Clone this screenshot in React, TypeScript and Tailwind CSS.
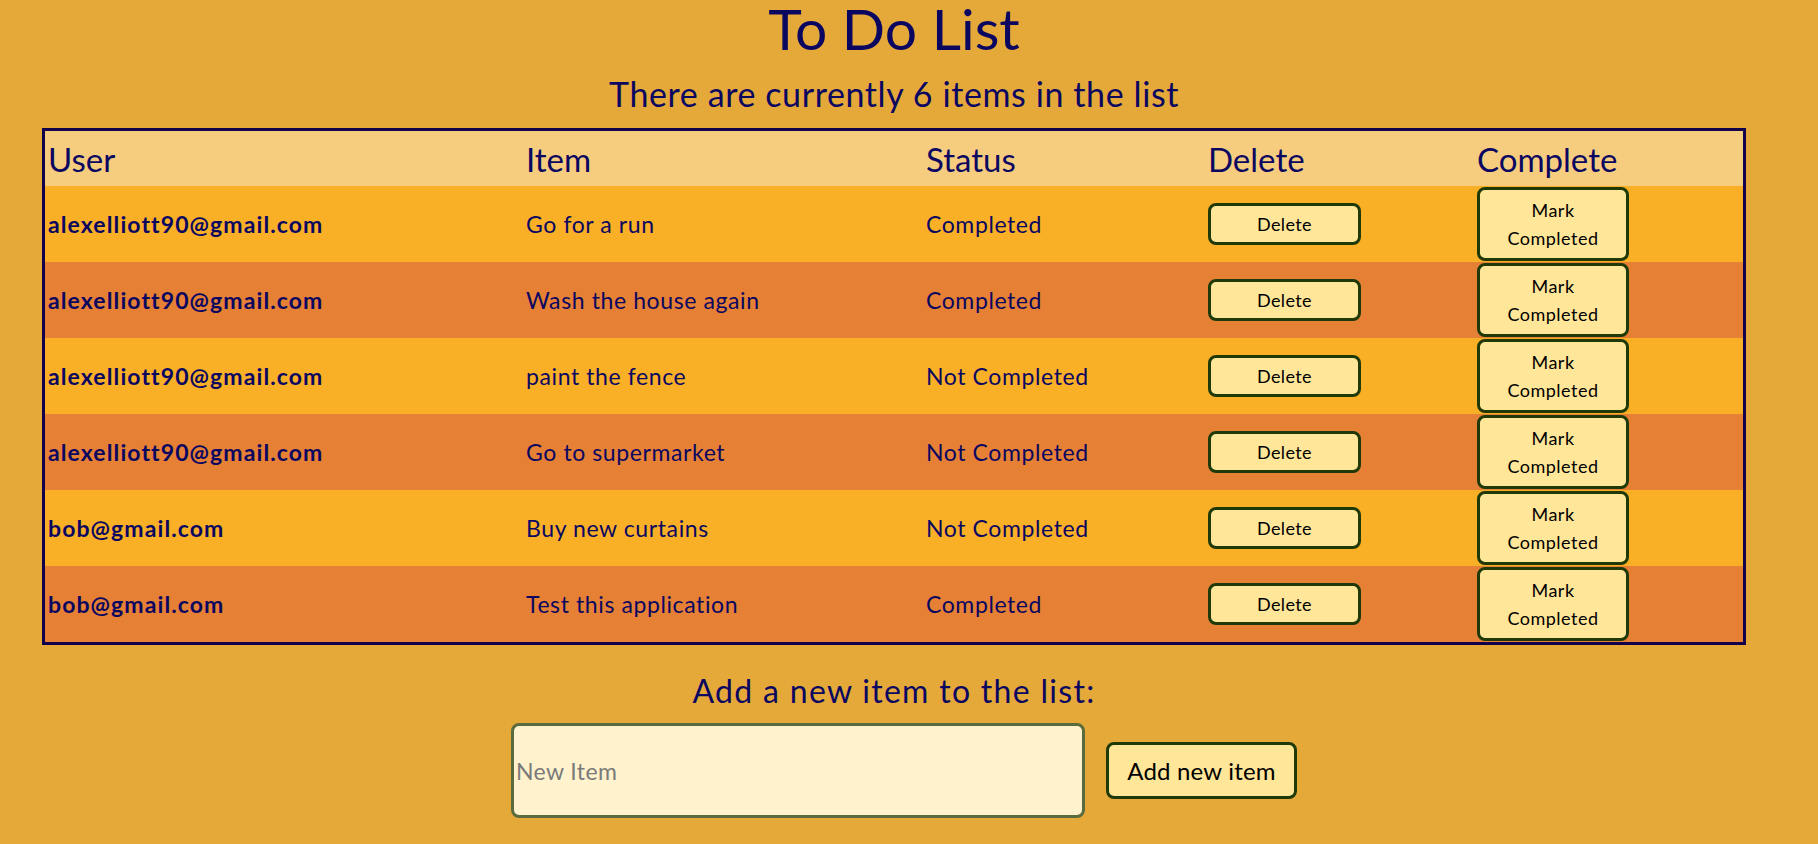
import React from "react";

const rows = [
  { user: "alexelliott90@gmail.com", item: "Go for a run", status: "Completed" },
  { user: "alexelliott90@gmail.com", item: "Wash the house again", status: "Completed" },
  { user: "alexelliott90@gmail.com", item: "paint the fence", status: "Not Completed" },
  { user: "alexelliott90@gmail.com", item: "Go to supermarket", status: "Not Completed" },
  { user: "bob@gmail.com", item: "Buy new curtains", status: "Not Completed" },
  { user: "bob@gmail.com", item: "Test this application", status: "Completed" },
];

export default function App() {
  return (
    <div className="min-h-screen w-full bg-[#e5a93a] font-['Lato',sans-serif] text-[#0b0760]">
      <div className="w-[1788px] flex flex-col items-center">
        <h1 className="mt-[2px] text-[57px] leading-[53px] font-normal">To Do List</h1>
        <p className="mt-[19px] text-[34px] leading-[40px] tracking-[0.6px]">There are currently 6 items in the list</p>
        <div className="mt-[14px] w-[1704px] border-[3px] border-[#12004a]">
          <div className="grid grid-cols-[478px_400px_282px_269px_1fr] h-[55px] items-center bg-[#f6cd7f] text-[33px] leading-[40px]">
            <div className="pl-[3px]">User</div>
            <div className="pl-[3px]">Item</div>
            <div className="pl-[3px]">Status</div>
            <div className="pl-[3px]">Delete</div>
            <div className="pl-[3px]">Complete</div>
          </div>
          {rows.map((r, i) => (
            <div
              key={i}
              className={
                "grid grid-cols-[478px_400px_282px_269px_1fr] h-[76px] items-center text-[23px] " +
                (i % 2 === 0 ? "bg-[#f9b027]" : "bg-[#e68034]")
              }
            >
              <div className="pl-[3px] font-bold tracking-[1.1px]">{r.user}</div>
              <div className="pl-[3px] tracking-[0.6px]">{r.item}</div>
              <div className="pl-[3px] tracking-[0.6px]">{r.status}</div>
              <div className="pl-[3px]">
                <button className="w-[153px] h-[42px] rounded-[8px] border-[3px] border-[#1f3a08] bg-[#ffe699] text-black text-[18px] leading-[28px] tracking-[0.4px]">
                  Delete
                </button>
              </div>
              <div className="pl-[3px]">
                <button className="w-[152px] h-[74px] rounded-[8px] border-[3px] border-[#1f3a08] bg-[#ffe699] text-black text-[18px] leading-[28px] tracking-[0.5px] flex flex-col items-center justify-center">
                  <span>Mark</span>
                  <span>Completed</span>
                </button>
              </div>
            </div>
          ))}
        </div>
        <p className="mt-[28px] text-[32px] leading-[36px] tracking-[1.3px]">Add a new item to the list:</p>
        <div className="mt-[14px] ml-[20px] flex items-center gap-[21px]">
          <input
            placeholder="New Item"
            className="w-[574px] h-[95px] rounded-[8px] border-[3px] border-[#5a6b3d] bg-[#fff2cc] pl-[2px] text-[23px] tracking-[0.4px] placeholder:text-[#7a7a7a] outline-none"
          />
          <button className="w-[191px] h-[57px] rounded-[8px] border-[3px] border-[#1f3a08] bg-[#ffe699] text-black text-[24px] tracking-[0.2px]">
            Add new item
          </button>
        </div>
      </div>
    </div>
  );
}
